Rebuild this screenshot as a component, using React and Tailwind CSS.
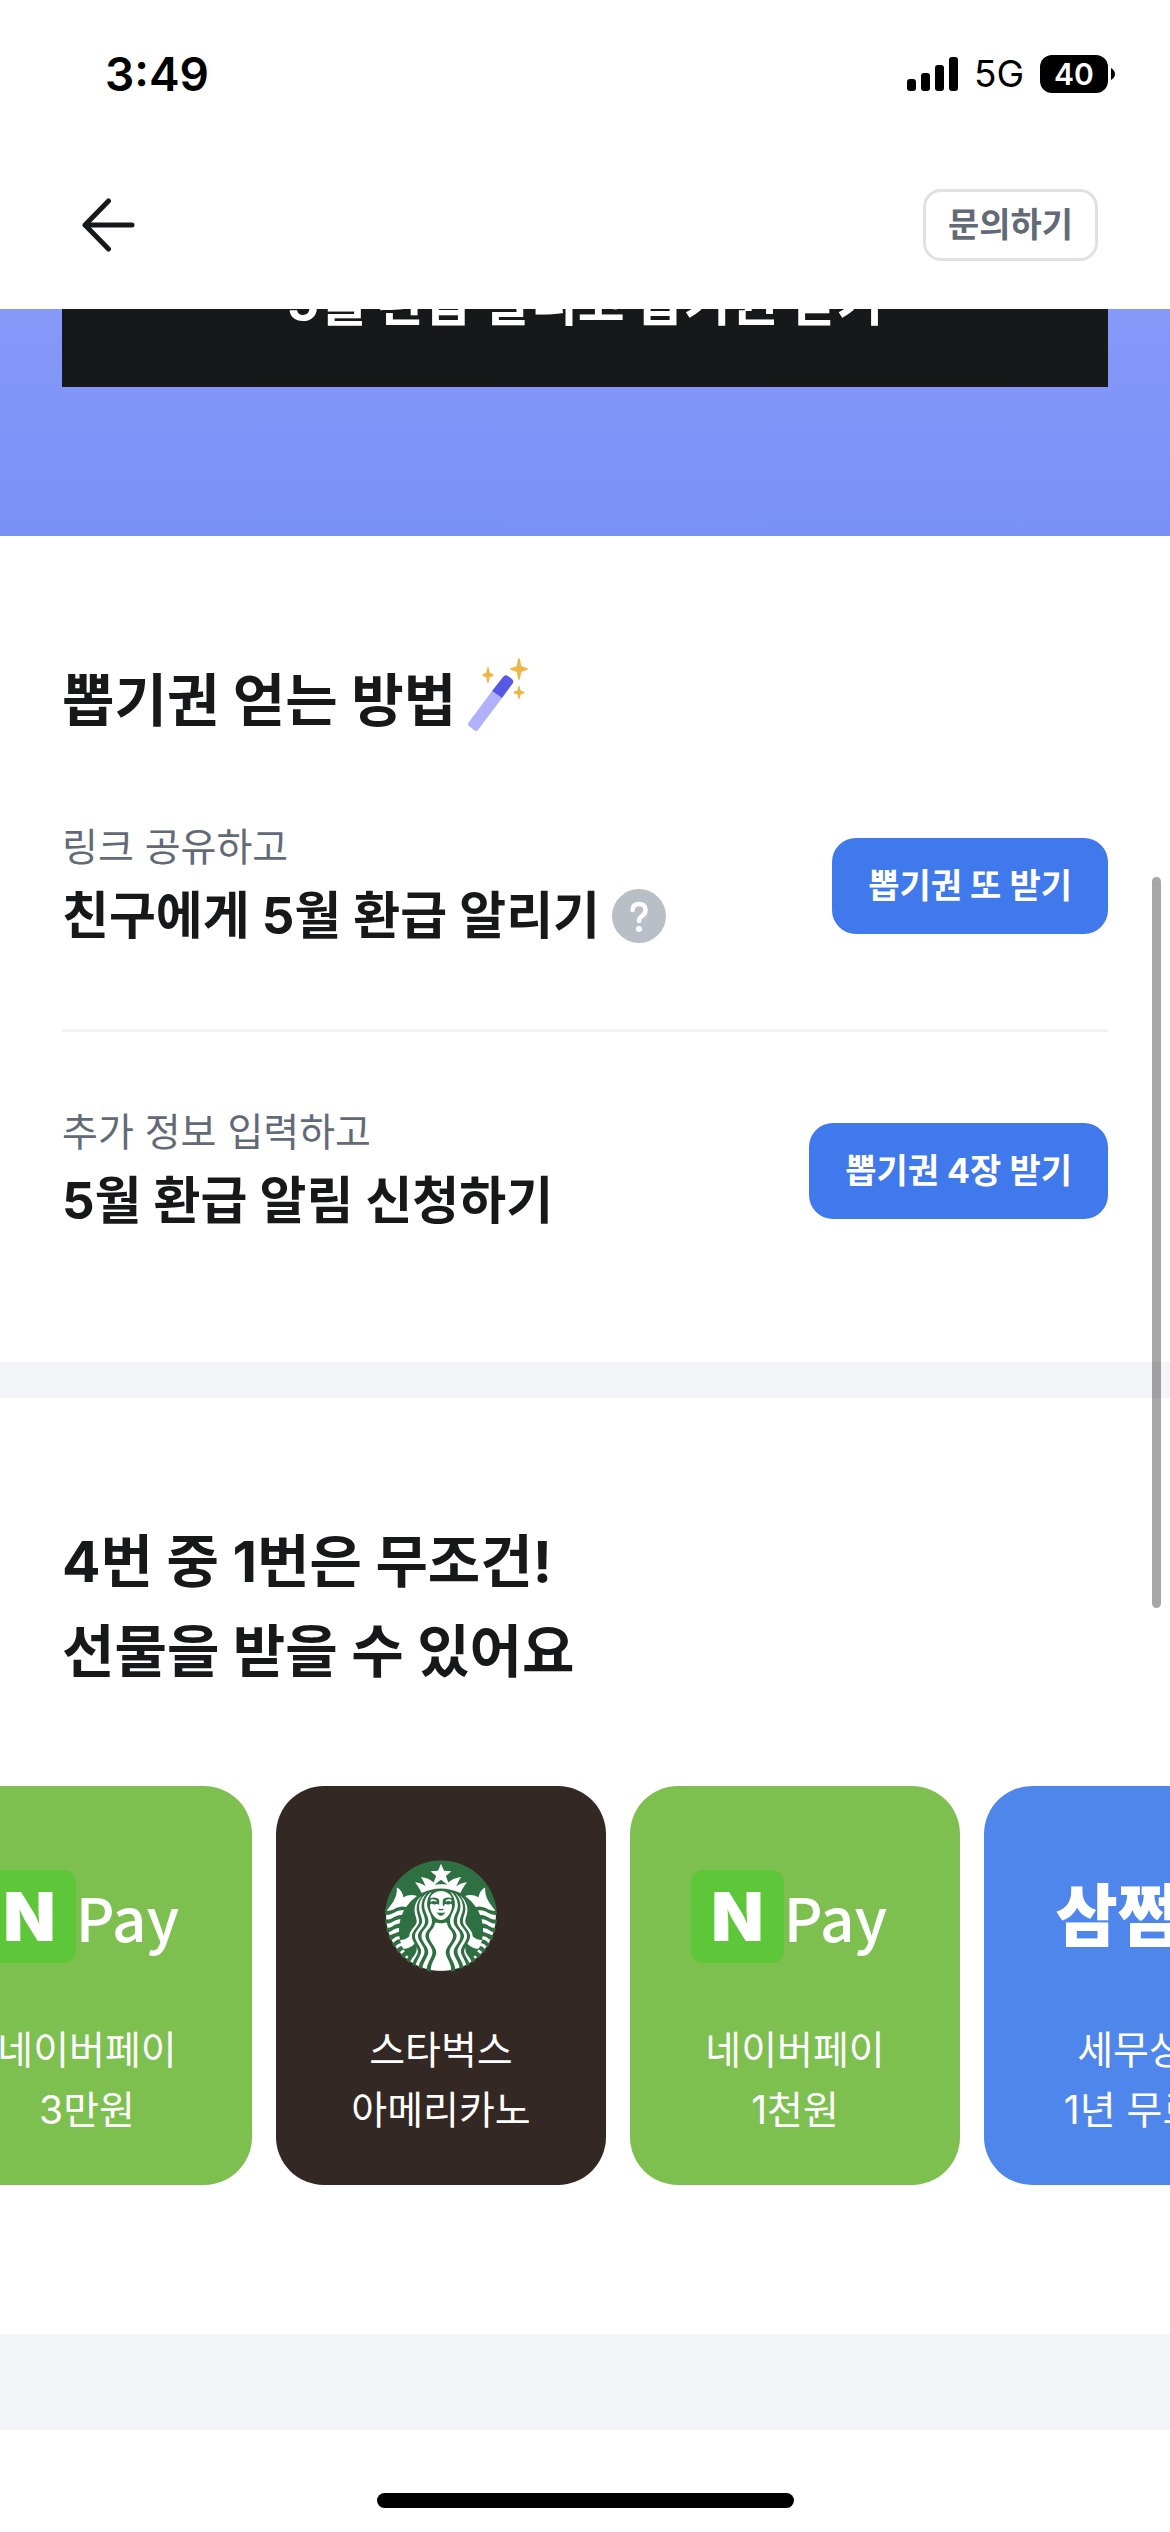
import React from "react";
import { SiStarbucks } from "react-icons/si";

function StatusBar() {
  return (
    <div className="flex h-[148px] items-center justify-between pr-[55px] pl-[105px] text-black">
      <span className="text-[46px] leading-[56px] font-semibold">3:49</span>
      <div className="flex items-center">
        <svg className="h-[34px] w-[51px]" viewBox="0 0 51 34" aria-hidden="true">
          <rect x="0" y="22" width="9" height="12" rx="3" />
          <rect x="14" y="16" width="9" height="18" rx="3" />
          <rect x="28" y="8" width="9" height="26" rx="3" />
          <rect x="42" y="0" width="9" height="34" rx="3" />
        </svg>
        <span className="ml-4 text-[37px] leading-[40px]">5G</span>
        <span className="ml-4 flex h-[38px] w-[68px] items-center justify-center rounded-xl bg-black text-[30px] leading-[38px] font-semibold text-white">
          40
        </span>
        <svg className="ml-[3px] h-3 w-1" viewBox="0 0 4 12" aria-hidden="true">
          <path d="M0 0C2.5 1.5 4 3.5 4 6S2.500 10.500 0 12Z" />
        </svg>
      </div>
    </div>
  );
}

function Header() {
  return (
    <header className="bg-white">
      <StatusBar />
      <div className="flex h-[161px] items-start justify-between pt-[41px] pr-[72px] pl-[72px]">
        <button type="button" aria-label="뒤로" className="flex h-[72px] items-center px-2">
          <svg className="h-[54px] w-[56px]" viewBox="0 0 56 54" fill="none" stroke="#17181a" strokeWidth="5" strokeLinecap="round" strokeLinejoin="round">
            <path d="M52 27H5M28.500 3L5 27l23.500 24" />
          </svg>
        </button>
        <button type="button" className="h-[72px] rounded-[18px] border-3 border-[#e0e1e6] px-[22px] text-[34px] leading-[66px] font-bold text-[#626a78]">
          문의하기
        </button>
      </div>
    </header>
  );
}

function Wand() {
  return (
    <svg className="h-[75px] w-[62px]" viewBox="0 0 62 75" aria-hidden="true">
      <path d="M24 33L34 40L10 72Q8 74 6 72L1 68Q-1 66 1 64Z" fill="#b0b0fb" />
      <path d="M24 33L35 19Q37 16 40 18L44 21Q46 23 45 25L34 40Z" fill="#5659e5" />
      <g fill="#f0b545">
        <path d="M51 0Q52 0 52.500 4Q53 8 54 8.500Q60 10 60 11Q60 12 54 13.500Q53 14 52.500 18Q52 22 51 22Q50 22 49.500 18Q49 14 48 13.500Q42 12 42 11Q42 10 48 8.500Q49 8 49.500 4Q50 0 51 0Z" />
        <path d="M20 9Q21 9 21.500 14.500Q25.500 16 25.500 17Q25.500 18 21.500 19.500Q21 25 20 25Q19 25 18.500 19.500Q14.500 18 14.500 17Q14.500 16 18.500 14.500Q19 9 20 9Z" />
        <path d="M51 28Q52 28 52.500 32.500Q56.500 33.500 56.500 34.500Q56.500 35.500 52.500 36.500Q52 41 51 41Q50 41 49.500 36.500Q45.500 35.500 45.500 34.500Q45.500 33.500 49.500 32.500Q50 28 51 28Z" />
      </g>
    </svg>
  );
}

function HelpButton() {
  return (
    <button type="button" aria-label="도움말" className="ml-3 size-[54px] rounded-full bg-[#b9bfc7]">
      <svg viewBox="0 0 54 54" fill="none" stroke="white" strokeWidth="4.500" strokeLinecap="round">
        <path d="M20.500 21Q21 15 27 15Q33.500 15 33.500 21Q33.500 25 30 27Q27 29 27 32" />
        <circle cx="27" cy="40" r="3" fill="white" stroke="none" />
      </svg>
    </button>
  );
}

function Mission({ hint, title, action, help }) {
  return (
    <li className="flex items-center justify-between border-[#f1f1f2] pt-[70px] pb-[74px] first:border-b-3 first:pt-0 last:pb-0">
      <div>
        <p className="text-[39px] leading-[60px] text-[#626a78]">{hint}</p>
        <h3 className="flex items-center text-[51px] leading-[78px] font-bold">
          {title}
          {help && <HelpButton />}
        </h3>
      </div>
      <button type="button" className="h-24 rounded-3xl bg-[#4079eb] px-9 text-[34px] leading-[60px] font-bold text-white">
        {action}
      </button>
    </li>
  );
}

function NaverPayLogo() {
  return (
    <div className="flex items-center pr-3">
      <span className="flex size-[93px] items-center justify-center rounded-xl bg-[#5ec639] text-[68px] leading-none font-black">N</span>
      <span className="font-['Noto_Sans_CJK_KR',sans-serif] text-[60px] leading-none font-medium">Pay</span>
    </div>
  );
}

function StarbucksLogo() {
  return (
    <span className="size-28 rounded-full bg-[radial-gradient(closest-side,white_97%,transparent_99%)] text-[#2f7043]">
      <SiStarbucks className="size-full" />
    </span>
  );
}

function SamLogo() {
  return <span className="text-[68px] leading-none font-black whitespace-nowrap">삼쩜삼</span>;
}

const rewards = [
  { tone: "bg-[#7dc04f]", Logo: NaverPayLogo, lines: ["네이버페이", "3만원"] },
  { tone: "bg-[#342825]", Logo: StarbucksLogo, lines: ["스타벅스", "아메리카노"] },
  { tone: "bg-[#7dc04f]", Logo: NaverPayLogo, lines: ["네이버페이", "1천원"] },
  { tone: "bg-[#4f86eb]", Logo: SamLogo, lines: ["세무상담", "1년 무료권"] },
];

export default function App() {
  return (
    <div className="relative min-h-screen overflow-hidden bg-white font-[Inter,'Noto_Sans_CJK_KR',sans-serif] text-[#17181a]">
      <Header />
      <main>
        <section className="flex h-[227px] flex-col justify-end overflow-hidden bg-linear-to-b from-[#8799f9] to-[#7990f7] px-[62px] pb-[149px]">
          <button type="button" className="h-[168px] shrink-0 bg-[#17181a] text-[51px] leading-[78px] font-bold text-white">
            5월 환급 알리고 뽑기권 받기
          </button>
        </section>

        <section className="px-[62px] pt-[120px] pb-[122px]">
          <h2 className="flex items-center text-[57px] leading-[90px] font-bold">
            뽑기권 얻는 방법
            <span className="ml-3 pb-3"><Wand /></span>
          </h2>
          <ul className="mt-[71px]">
            <Mission hint="링크 공유하고" title="친구에게 5월 환급 알리기" action="뽑기권 또 받기" help />
            <Mission hint="추가 정보 입력하고" title="5월 환급 알림 신청하기" action="뽑기권 4장 받기" />
          </ul>
        </section>

        <div className="h-9 bg-[#f4f5f8]" />

        <section className="pt-[119px] pb-[149px]">
          <h2 className="px-[62px] text-[57px] leading-[90px] font-bold">
            4번 중 1번은 무조건!
            <br />
            선물을 받을 수 있어요
          </h2>
          <ul className="mt-[89px] -ml-[78px] flex gap-6">
            {rewards.map(({ tone, Logo, lines }, i) => (
              <li key={i} className={`flex w-[330px] shrink-0 flex-col items-center rounded-[48px] pt-[74px] pb-[45px] text-white ${tone}`}>
                <div className="flex h-28 items-center justify-center">
                  <Logo />
                </div>
                <p className="mt-12 text-center text-[39px] leading-[60px] whitespace-nowrap">
                  {lines[0]}
                  <br />
                  {lines[1]}
                </p>
              </li>
            ))}
          </ul>
        </section>

        <div className="h-24 bg-[#f4f5f8]" />
      </main>
      <footer className="flex justify-center pt-[63px] pb-6">
        <div className="h-[15px] w-[417px] rounded-full bg-black" />
      </footer>
      <div className="absolute top-[877px] right-[9px] h-[731px] w-[9px] rounded-full bg-black/35" />
    </div>
  );
}
